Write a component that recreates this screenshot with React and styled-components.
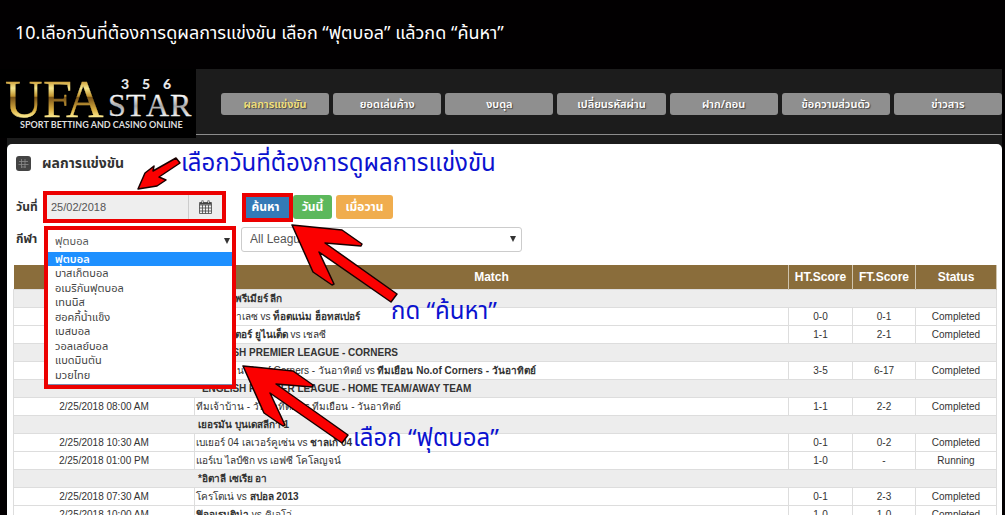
import React from "react";
import styled, { createGlobalStyle, css } from "styled-components";

const ui = '"Liberation Sans", "Noto Sans", sans-serif';
const thai = '"Open Sans", "Noto Sans Thai", "Noto Sans", sans-serif';
const loopless = '"Noto Sans", "Noto Sans Thai", sans-serif';

const GlobalStyle = createGlobalStyle`
  html { scrollbar-width: none; }
  body { margin: 0; background: #020001; font-family: ${ui}; color: #333; }
  * { box-sizing: border-box; }
`;

const StepTitle = styled.h1`
  margin: 0;
  height: 69px;
  padding: 16px 15px 0;
  color: #fff;
  font: 400 18px/32px ${loopless};
  white-space: nowrap;
`;

const Site = styled.div`
  margin-right: 3px;
`;

const TopBar = styled.header`
  display: flex;
  height: 69px;
  background: #1c1c1c;
`;

const Logo = styled.a`
  flex: 0 0 196px;
  height: 69px;
  background: #000;
`;

const Nav = styled.nav`
  flex: 1;
  display: flex;
  gap: 4px;
  height: 66px;
  padding: 24px 0 0 25px;
  border-bottom: 1px solid #8c8c8c;
`;

const NavLink = styled.a`
  flex: 1 1 0;
  height: 22px;
  border-radius: 3px;
  background: #8f8f8f;
  color: ${(p) => (p.$active ? "#f5e27a" : "#fff")};
  font: 600 11px/22px ${thai};
  text-align: center;
  text-decoration: none;
  text-shadow: 1px 1px 1px #444;
  white-space: nowrap;
`;

const Body = styled.div`
  margin-left: 7px;
  padding-top: 6px;
  background: #1c1c1c;
`;

const Panel = styled.main`
  position: relative;
  padding: 8px 5px 0 6px;
  background: #fff;
  border-radius: 5px 5px 0 0;
`;

const PanelHead = styled.div`
  display: flex;
  align-items: center;
  gap: 11px;
  height: 22px;
  padding-left: 3px;
`;

const PanelTitle = styled.h2`
  margin: 0;
  font: 700 14px/22px ${thai};
  color: #333;
`;

const FormRow = styled.div`
  display: flex;
  align-items: center;
  height: ${(p) => p.$height}px;
  margin-top: ${(p) => p.$top}px;
  padding-left: 3px;
`;

const Label = styled.label`
  flex: 0 0 ${(p) => p.$width}px;
  font: 700 12px/20px ${thai};
  white-space: nowrap;
`;

const DateGroup = styled.div`
  display: flex;
  flex: none;
  width: 183px;
  height: 32px;
  border: 4px solid #ec0000;
  background: #eee;
`;

const DateInput = styled.input`
  flex: 1 1 0;
  width: 0;
  min-width: 0;
  padding: 0 4px;
  border: 0;
  border-right: 1px solid #ccc;
  background: #eee;
  color: #555;
  font: 11px ${ui};
`;

const CalendarButton = styled.button`
  flex: 0 0 33px;
  display: grid;
  place-items: center;
  padding: 0;
  border: 0;
  background: #eee;
`;

const Actions = styled.div`
  display: flex;
  align-items: center;
  margin-left: 16px;
`;

const tones = { blue: "#337ab7", green: "#5cb85c", orange: "#f0ad4e" };

const Button = styled.button`
  width: ${(p) => p.$width}px;
  height: 24px;
  margin-right: 4px;
  padding: 0;
  border: 0;
  border-radius: 3px;
  background: ${(p) => tones[p.$tone]};
  color: #fff;
  font: 700 12px/20px ${thai};
  ${(p) =>
    p.$marked &&
    css`
      height: 29px;
      margin-right: 0;
      padding-right: 4px;
      border: 4px solid #ec0000;
      border-radius: 0;
    `}
`;

const SportPicker = styled.div`
  position: relative;
  flex: 0 0 192px;
  height: 26px;
  margin-right: 5px;
`;

const SportOpen = styled.div`
  position: absolute;
  inset: 0 0 auto 0;
  z-index: 1;
  border: 4px solid #ec0000;
  background: #fff;
`;

const SelectBox = styled.div`
  position: relative;
  flex: 0 0 ${(p) => p.$width}px;
  height: ${(p) => p.$height}px;

  svg {
    position: absolute;
    top: 50%;
    right: ${(p) => (p.$width ? 6 : 2)}px;
    margin-top: -3px;
    pointer-events: none;
  }
`;

const Select = styled.select`
  appearance: none;
  width: 100%;
  height: 100%;
  padding: 0 ${(p) => (p.$plain ? 7 : 8)}px;
  border: ${(p) => (p.$plain ? "0" : "1px solid #ccc")};
  border-radius: ${(p) => (p.$plain ? "0" : "3px")};
  background: #fff;
  color: #555;
  font: ${(p) => (p.$plain ? "11px " + thai : "12px " + ui)};
`;

const Options = styled.ul`
  display: grid;
  grid-auto-rows: 1fr;
  height: 134px;
  margin: 0;
  padding: 1px 0 2px;
  list-style: none;
  border-bottom: 1px solid #7a8ab0;
`;

const Option = styled.li`
  padding-left: 7px;
  background: ${(p) => (p.$on ? "#1e90ff" : "#fff")};
  color: ${(p) => (p.$on ? "#fff" : "#444")};
  font: ${(p) => (p.$on ? 600 : 400)} 11px/14px ${thai};
`;

const Table = styled.table`
  width: 100%;
  margin-top: 13px;
  border-collapse: collapse;
  table-layout: fixed;
  font-size: 10px;
`;

const Th = styled.th`
  width: ${(p) => (p.$width ? p.$width + "px" : "auto")};
  height: 24px;
  padding: 0;
  border-right: 1px solid #cfc4ae;
  background: #8a6d3b;
  color: #fff;
  font: 700 12px/22px ${ui};
`;

const Td = styled.td`
  height: 18px;
  padding: 0 1px;
  border: 1px solid #ddd;
  line-height: 17px;
  text-align: ${(p) => (p.$left ? "left" : "center")};
  white-space: nowrap;
  overflow: hidden;
`;

const GroupTd = styled.td`
  height: 18px;
  padding: 0 2px 0 184px;
  border: 1px solid #ddd;
  background: #ededed;
  font-weight: 700;
  line-height: 17px;
  white-space: nowrap;
`;

const Annotations = styled.div`
  position: absolute;
  inset: 0;
  z-index: 2;
  pointer-events: none;

  svg {
    position: absolute;
    left: 0;
    top: 0;
  }
`;

const Note = styled.span`
  position: absolute;
  left: ${(p) => p.$x}px;
  top: ${(p) => p.$y}px;
  color: #0b12cf;
  font: 400 24px/36px ${loopless};
  white-space: nowrap;
`;

const navItems = ["ผลการแข่งขัน", "ยอดเล่นค้าง", "งบดุล", "เปลี่ยนรหัสผ่าน", "ฝาก/ถอน", "ข้อความส่วนตัว", "ข่าวสาร"];
const sports = ["ฟุตบอล", "บาสเก็ตบอล", "อเมริกันฟุตบอล", "เทนนิส", "ฮอคกี้น้ำแข็ง", "เบสบอล", "วอลเลย์บอล", "แบดมินตัน", "มวยไทย"];

const rows = [
  { group: "*อังกฤษ พรีเมียร์ ลีก" },
  { time: "2/25/2018 07:00 AM", home: "คริสตัล พาเลซ", away: "ท็อตแน่ม ฮ็อทสเปอร์", bold: "away", ht: "0-0", ft: "0-1" },
  { time: "2/25/2018 09:05 AM", home: "แมนเชสเตอร์ ยูไนเต็ด", away: "เชลซี", bold: "home", ht: "1-1", ft: "2-1" },
  { group: "*ENGLISH PREMIER LEAGUE - CORNERS" },
  { time: "2/25/2018 07:00 AM", home: "ทีมเจ้าบ้าน No.of Corners - วันอาทิตย์", away: "ทีมเยือน No.of Corners - วันอาทิตย์", bold: "away", ht: "3-5", ft: "6-17" },
  { group: "*ENGLISH PREMIER LEAGUE - HOME TEAM/AWAY TEAM" },
  { time: "2/25/2018 08:00 AM", home: "ทีมเจ้าบ้าน - วันอาทิตย์", away: "ทีมเยือน - วันอาทิตย์", ht: "1-1", ft: "2-2" },
  { group: "เยอรมัน บุนเดสลีกา 1" },
  { time: "2/25/2018 10:30 AM", home: "เบเยอร์ 04 เลเวอร์คูเซ่น", away: "ชาลเก้ 04", bold: "away", ht: "0-1", ft: "0-2" },
  { time: "2/25/2018 01:00 PM", home: "แอร์เบ ไลป์ซิก", away: "เอฟซี โคโลญจน์", ht: "1-0", ft: "-", status: "Running" },
  { group: "*อิตาลี เซเรีย อา" },
  { time: "2/25/2018 07:30 AM", home: "โครโตเน่", away: "สปอล 2013", bold: "away", ht: "0-1", ft: "2-3" },
  { time: "2/25/2018 10:00 AM", home: "ฟิออเรนติน่า", away: "คิเอโว่", bold: "home", ht: "1-0", ft: "1-0" },
];

const Caret = () => (
  <svg width="6" height="6" viewBox="0 0 6 6" aria-hidden="true">
    <path d="M0 0h6L3 6z" fill="#333" />
  </svg>
);

const LogoArt = () => (
  <svg width="196" height="69" viewBox="0 0 196 69" role="img" aria-label="UFA STAR 356">
    <defs>
      <linearGradient id="gold" gradientUnits="userSpaceOnUse" x1="0" y1="12" x2="0" y2="48">
        <stop offset="0" stopColor="#c99a35" />
        <stop offset="0.2" stopColor="#f6e78f" />
        <stop offset="0.42" stopColor="#c2952f" />
        <stop offset="0.46" stopColor="#7a5418" />
        <stop offset="0.8" stopColor="#d9ae40" />
        <stop offset="1" stopColor="#fbe98f" />
      </linearGradient>
      <linearGradient id="silver" gradientUnits="userSpaceOnUse" x1="0" y1="26" x2="0" y2="48">
        <stop offset="0" stopColor="#ffffff" />
        <stop offset="0.5" stopColor="#a8a8a8" />
        <stop offset="1" stopColor="#f5f5f5" />
      </linearGradient>
    </defs>
    <g fontFamily="Liberation Serif, serif" fill="url(#gold)" stroke="url(#gold)" strokeWidth="0.3" fontSize="52">
      <text x="5" y="48">U</text>
      <text x="43" y="48">F</text>
      <text x="66" y="48">A</text>
    </g>
    <g fontFamily="Liberation Serif, serif" fill="url(#silver)" stroke="url(#silver)" strokeWidth="0.3" fontSize="32">
      <text x="108" y="47">S</text>
      <text x="126" y="47">T</text>
      <text x="146" y="47">A</text>
      <text x="170" y="47">R</text>
    </g>
    <g fontFamily="Lato, sans-serif" fontWeight="900" fill="#e8e8e8" fontSize="14">
      <text x="121" y="20">3</text>
      <text x="142" y="20">5</text>
      <text x="163" y="20">6</text>
    </g>
    <text x="20" y="59" fontFamily="Lato, sans-serif" fontWeight="700" fill="#ddd" fontSize="9">SPORT BETTING AND CASINO ONLINE</text>
  </svg>
);

const BallIcon = () => (
  <svg width="15" height="15" viewBox="0 0 15 15" aria-hidden="true">
    <rect width="15" height="15" rx="3" fill="#444" />
    <g fill="none" stroke="#8a8a8a" strokeWidth="0.8">
      <path d="M3 5.500H12M2.500 8.500H12.500M5.500 11H10M5.500 3V12M9 3V12" />
    </g>
  </svg>
);

const CalendarIcon = () => (
  <svg width="13" height="14" viewBox="0 0 13 14" aria-hidden="true">
    <path d="M0.500 2.500h12v11h-12zM0.500 5h12M0.500 8h12M0.500 11h12M3.500 5v8.500M6.500 5v8.500M9.500 5v8.500" fill="none" stroke="#444" strokeWidth="0.8" />
    <path d="M1 2.500h11v2H1z" fill="#444" />
    <path d="M3.500 0.500v3M9.500 0.500v3" stroke="#444" strokeWidth="2" />
    <path d="M3.500 1v2M9.500 1v2" stroke="#ddd" strokeWidth="0.800" />
  </svg>
);

const bigArrow = "M285 81L335 86L355 100L354 102L318 99L390 150L384 158L312 108L327 140L325 141L306 128Z";

const Match = ({ home, away, bold }) => (
  <>
    {bold === "home" ? <b>{home}</b> : home} vs {bold === "away" ? <b>{away}</b> : away}
  </>
);

export default function App() {
  return (
    <>
      <GlobalStyle />
      <StepTitle>10.เลือกวันที่ต้องการดูผลการแข่งขัน เลือก “ฟุตบอล” แล้วกด “ค้นหา”</StepTitle>
      <Site>
        <TopBar>
          <Logo href="#home"><LogoArt /></Logo>
          <Nav>
            {navItems.map((item, i) => (
              <NavLink key={item} href="#nav" $active={i === 0}>{item}</NavLink>
            ))}
          </Nav>
        </TopBar>
        <Body>
          <Panel>
            <PanelHead>
              <BallIcon />
              <PanelTitle>ผลการแข่งขัน</PanelTitle>
            </PanelHead>
            <FormRow $height={32} $top={17}>
              <Label htmlFor="date" $width={27}>วันที่</Label>
              <DateGroup>
                <DateInput id="date" defaultValue="25/02/2018" />
                <CalendarButton type="button" aria-label="ปฏิทิน"><CalendarIcon /></CalendarButton>
              </DateGroup>
              <Actions>
                <Button type="button" $tone="blue" $width={51} $marked>ค้นหา</Button>
                <Button type="button" $tone="green" $width={39}>วันนี้</Button>
                <Button type="button" $tone="orange" $width={57}>เมื่อวาน</Button>
              </Actions>
            </FormRow>
            <FormRow $height={26} $top={3}>
              <Label htmlFor="sport" $width={28}>กีฬา</Label>
              <SportPicker>
                <SportOpen>
                  <SelectBox $height={21}>
                    <Select id="sport" $plain defaultValue={sports[0]}>
                      {sports.map((s) => <option key={s}>{s}</option>)}
                    </Select>
                    <Caret />
                  </SelectBox>
                  <Options role="listbox" aria-label="กีฬา">
                    {sports.map((s, i) => (
                      <Option key={s} role="option" aria-selected={i === 0} $on={i === 0}>{s}</Option>
                    ))}
                  </Options>
                </SportOpen>
              </SportPicker>
              <SelectBox $width={281} $height={25}>
                <Select aria-label="League"><option>All League</option></Select>
                <Caret />
              </SelectBox>
            </FormRow>
            <Table>
              <thead>
                <tr>
                  <Th $width={181}>Date</Th>
                  <Th>Match</Th>
                  <Th $width={64}>HT.Score</Th>
                  <Th $width={63}>FT.Score</Th>
                  <Th $width={81}>Status</Th>
                </tr>
              </thead>
              <tbody>
                {rows.map((r, i) =>
                  r.group ? (
                    <tr key={i}><GroupTd colSpan={5}>{r.group}</GroupTd></tr>
                  ) : (
                    <tr key={i}>
                      <Td>{r.time}</Td>
                      <Td $left><Match {...r} /></Td>
                      <Td>{r.ht}</Td>
                      <Td>{r.ft}</Td>
                      <Td>{r.status || "Completed"}</Td>
                    </tr>
                  )
                )}
              </tbody>
            </Table>
            <Annotations>
              <svg width="420" height="320" viewBox="0 0 420 320" aria-hidden="true">
                <g fill="#fb0000" stroke="#1a0000" strokeWidth="1.500" strokeLinejoin="round">
                  <path d="M131 45L138 29L147 22L146 27L169 14L173 19L152 33L159 36L150 42Z" />
                  <path d={bigArrow} />
                  <path d={bigArrow} transform="translate(-49 141)" />
                </g>
              </svg>
              <Note $x={174} $y={0}>เลือกวันที่ต้องการดูผลการแข่งขัน</Note>
              <Note $x={384} $y={148}>กด “ค้นหา”</Note>
              <Note $x={346} $y={275}>เลือก “ฟุตบอล”</Note>
            </Annotations>
          </Panel>
        </Body>
      </Site>
    </>
  );
}
